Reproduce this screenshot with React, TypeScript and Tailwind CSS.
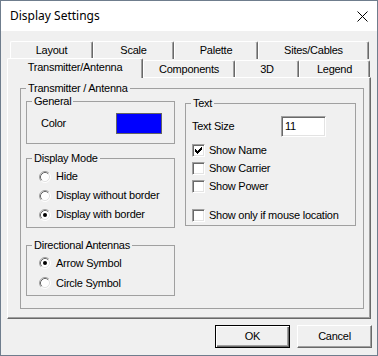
import React from "react";

const font = { fontFamily: '"Liberation Sans", Arial, sans-serif' };

function Radio({ checked }: { checked?: boolean }) {
  return (
    <svg width="12" height="12" viewBox="0 0 12 12" className="shrink-0">
      <circle cx="6" cy="6" r="5" fill="#fff" />
      <path d="M2.11 9.89 A5.5 5.5 0 0 1 9.89 2.11" fill="none" stroke="#a0a0a0" />
      <path d="M9.89 2.11 A5.5 5.5 0 0 1 2.11 9.89" fill="none" stroke="#fff" />
      <path d="M2.82 9.18 A4.5 4.5 0 0 1 9.18 2.82" fill="none" stroke="#696969" />
      <path d="M9.18 2.82 A4.5 4.5 0 0 1 2.82 9.18" fill="none" stroke="#e3e3e3" />
      {checked && <circle cx="6" cy="6" r="2" fill="#000" />}
    </svg>
  );
}

// classic 7x7 check mark, pixel by pixel
const checkPixels: [number, number][] = [
  [8, 2], [7, 3], [8, 3], [2, 4], [6, 4], [7, 4], [8, 4],
  [2, 5], [3, 5], [5, 5], [6, 5], [7, 5],
  [2, 6], [3, 6], [4, 6], [5, 6], [6, 6], [3, 7], [4, 7], [5, 7], [4, 8],
];

function Checkbox({ checked }: { checked?: boolean }) {
  return (
    <div className="w-[13px] h-[13px] shrink-0 bg-white border border-t-[#a0a0a0] border-l-[#a0a0a0] border-r-white border-b-white shadow-[inset_1px_1px_0_#696969,inset_-1px_-1px_0_#e3e3e3]">
      {checked && (
        <svg width="11" height="11" viewBox="0 0 11 11" className="block">
          {checkPixels.map(([x, y]) => (
            <rect key={`${x}-${y}`} x={x} y={y} width="1" height="1" fill="#000" />
          ))}
        </svg>
      )}
    </div>
  );
}

function Group({ label, className, children }: { label: string; className?: string; children?: React.ReactNode }) {
  return (
    <fieldset className={`border border-[#a0a0a0] ${className ?? ""}`}>
      <legend className="ml-[5px] px-[2px] leading-[13px]">{label}</legend>
      {children}
    </fieldset>
  );
}

function Tab({ label, width, selected, back }: { label: string; width: string; selected?: boolean; back?: boolean }) {
  const size = selected ? "h-[20px] -mb-px pb-[2px] relative z-10" : back ? "h-[18px]" : "h-[17px]";
  return (
    <div
      className={`${width} ${size} flex items-center justify-center bg-[#f0f0f0] border-t border-l border-r border-t-white border-l-white border-r-[#696969] shadow-[inset_-1px_0_0_#a0a0a0] rounded-t-[2px]`}
    >
      {label}
    </div>
  );
}

function Button({ label, isDefault }: { label: string; isDefault?: boolean }) {
  return (
    <div
      className={
        isDefault
          ? "w-[75px] h-[23px] flex items-center justify-center border border-black shadow-[inset_1px_1px_0_#fff,inset_-1px_-1px_0_#696969,inset_-2px_-2px_0_#a0a0a0] bg-[#f0f0f0]"
          : "w-[75px] h-[23px] flex items-center justify-center border border-t-white border-l-white border-r-[#696969] border-b-[#696969] shadow-[inset_-1px_-1px_0_#a0a0a0] bg-[#f0f0f0]"
      }
    >
      {label}
    </div>
  );
}

export default function App() {
  return (
    <div
      className="w-[378px] h-[356px] border border-[#6f7d8d] bg-[#f0f0f0] text-[11px] text-black tracking-[-0.25px] flex flex-col"
      style={font}
    >
      {/* title bar */}
      <div className="h-[30px] bg-white flex items-center justify-between pl-[9px] pr-[9px] shrink-0">
        <span className="text-[12px] tracking-normal" style={{ fontFamily: '"Noto Sans", sans-serif' }}>
          Display Settings
        </span>
        <svg width="11" height="11" viewBox="0 0 11 11" className="mt-[1px]">
          <path d="M0.5 0.5 L10.5 10.5 M10.5 0.5 L0.5 10.5" stroke="#000" strokeWidth="1" />
        </svg>
      </div>

      {/* body */}
      <div className="flex-1 pt-[10px] flex flex-col">
        <div className="flex ml-[9px]">
          <Tab label="Layout" width="w-[83px]" back />
          <Tab label="Scale" width="w-[81px]" back />
          <Tab label="Palette" width="w-[84px]" back />
          <Tab label="Sites/Cables" width="w-[111px]" back />
        </div>
        <div className="flex items-end h-[17px] ml-[6px] mt-px">
          <Tab label="Transmitter/Antenna" width="w-[136px]" selected />
          <Tab label="Components" width="w-[92px]" />
          <Tab label="3D" width="w-[64px]" />
          <Tab label="Legend" width="w-[71px]" />
        </div>

        {/* tab page */}
        <div className="ml-[6px] w-[364px] h-[242px] border border-t-white border-l-white border-r-[#696969] border-b-[#696969] shadow-[inset_-1px_-1px_0_#a0a0a0]">
          <Group label="Transmitter / Antenna" className="ml-[12px] mt-[4px] w-[344px] h-[227px]">
            <div className="flex pl-[5px] gap-[10px]">
              <div className="w-[149px] flex flex-col">
                <Group label="General" className="h-[49px]">
                  <div className="mt-[5px] h-[21px] flex items-center pl-[14px]">
                    <span className="w-[75px]">Color</span>
                    <div className="w-[46px] h-[21px] bg-[#0000ff] border border-[#646464]" />
                  </div>
                </Group>

                <Group label="Display Mode" className="h-[76px] mt-[8px]">
                  <div className="pt-[2px]">
                    {[
                      ["Hide", false],
                      ["Display without border", false],
                      ["Display with border", true],
                    ].map(([t, c]) => (
                      <div key={t as string} className="h-[19px] flex items-center pl-[12px] gap-[5px]">
                        <Radio checked={c as boolean} />
                        <span>{t as string}</span>
                      </div>
                    ))}
                  </div>
                </Group>

                <Group label="Directional Antennas" className="h-[57px] mt-[11px]">
                  <div className="pt-px">
                    <div className="h-[20px] flex items-center pl-[12px] gap-[5px]">
                      <Radio checked />
                      <span>Arrow Symbol</span>
                    </div>
                    <div className="h-[20px] flex items-center pl-[12px] gap-[5px]">
                      <Radio />
                      <span>Circle Symbol</span>
                    </div>
                  </div>
                </Group>
              </div>

              <Group label="Text" className="w-[171px] h-[129px] mt-[2px]">
                <div className="mt-[6px] h-[21px] flex items-center pl-[6px]">
                  <span className="w-[89px]">Text Size</span>
                  <div className="w-[45px] h-[21px] bg-white border border-t-[#a0a0a0] border-l-[#a0a0a0] border-r-white border-b-white shadow-[inset_1px_1px_0_#696969,inset_-1px_-1px_0_#e3e3e3] flex items-center pl-[3px]">
                    11
                  </div>
                </div>
                <div className="mt-[4px]">
                  <div className="h-[18px] flex items-center pl-[6px] gap-[4px]">
                    <Checkbox checked />
                    <span>Show Name</span>
                  </div>
                  <div className="h-[18px] flex items-center pl-[6px] gap-[4px]">
                    <Checkbox />
                    <span>Show Carrier</span>
                  </div>
                  <div className="h-[18px] flex items-center pl-[6px] gap-[4px]">
                    <Checkbox />
                    <span>Show Power</span>
                  </div>
                  <div className="h-[18px] mt-[11px] flex items-center pl-[6px] gap-[4px]">
                    <Checkbox />
                    <span>Show only if mouse location</span>
                  </div>
                </div>
              </Group>
            </div>
          </Group>
        </div>

        {/* buttons */}
        <div className="flex justify-end gap-[7px] pr-[5px] mt-[6px]">
          <Button label="OK" isDefault />
          <Button label="Cancel" />
        </div>
      </div>
    </div>
  );
}
